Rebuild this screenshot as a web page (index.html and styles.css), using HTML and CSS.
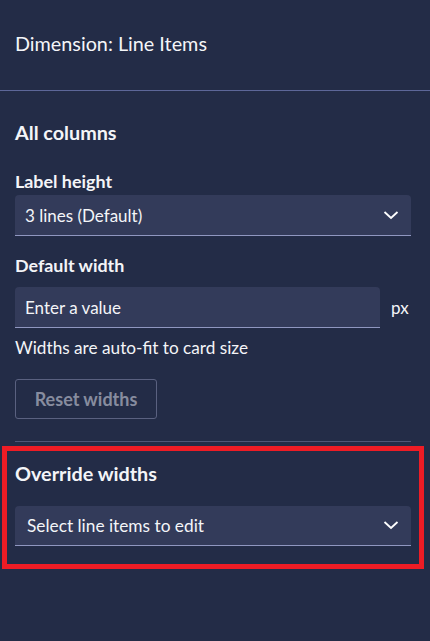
FILE: index.html
```html
<!DOCTYPE html>
<html>
<head>
<meta charset="utf-8">
<link rel="stylesheet" href="styles.css">
</head>
<body>
<div class="panel">
  <div class="header">Dimension: Line Items</div>
  <div class="content">
    <h2 class="section-title first">All columns</h2>
    <div class="label label-height">Label height</div>
    <div class="select">
      <span class="select-text">3 lines (Default)</span>
      <svg class="chev" width="16" height="9" viewBox="0 0 16 9"><path d="M1.5 1 L8 7 L14.5 1" fill="none" stroke="#ffffff" stroke-width="1.8"/></svg>
    </div>
    <div class="label label-width">Default width</div>
    <div class="input-row">
      <div class="input">Enter a value</div>
      <span class="unit">px</span>
    </div>
    <div class="hint">Widths are auto-fit to card size</div>
    <button class="reset">Reset widths</button>
    <div class="divider"></div>
    <div class="override">
      <h2 class="section-title">Override widths</h2>
      <div class="select select2">
        <span class="select-text s2">Select line items to edit</span>
        <svg class="chev" width="16" height="9" viewBox="0 0 16 9"><path d="M1.5 1 L8 7 L14.5 1" fill="none" stroke="#ffffff" stroke-width="1.8"/></svg>
      </div>
      <div class="highlight"></div>
    </div>
  </div>
</div>
</body>
</html>
```
FILE: styles.css
```css
html, body {
  margin: 0;
  padding: 0;
  background: #232c47;
  height: 100%;
}
body {
  font-family: Lato, "Liberation Sans", sans-serif;
  color: #f4f5f8;
}
.panel {
  width: 430px;
}
.header {
  height: 91px;
  box-sizing: border-box;
  padding: 32px 15px 0;
  font-size: 19.8px;
  line-height: 22px;
  border-bottom: 1px solid #5d6799;
}
.content {
  padding: 0 19px 0 15px;
}
.section-title {
  margin: 0;
  font-size: 19.8px;
  line-height: 24px;
  font-weight: 700;
}
.section-title.first {
  margin-top: 29px;
}
.label {
  font-size: 17.9px;
  line-height: 22px;
  font-weight: 700;
}
.label-height {
  margin-top: 26px;
}
.select {
  margin-top: 3px;
  height: 41px;
  box-sizing: border-box;
  background: #333b5a;
  border-radius: 4px 4px 0 0;
  border-bottom: 1px solid #9097c0;
  display: flex;
  align-items: center;
  justify-content: space-between;
  padding: 0 12px 0 10px;
}
.select-text {
  font-size: 17px;
}
.select-text.s2 {
  padding-left: 2px;
  font-size: 17.3px;
}
.chev {
  display: block;
}
.label-width {
  margin-top: 18px;
}
.input-row {
  margin-top: 11px;
  display: flex;
  align-items: center;
  gap: 11px;
}
.input {
  flex: 1;
  height: 41px;
  box-sizing: border-box;
  background: #333b5a;
  border-radius: 4px 4px 0 0;
  border-bottom: 1px solid #9097c0;
  display: flex;
  align-items: center;
  padding: 0 10px;
  font-size: 17px;
}
.unit {
  font-size: 17px;
  width: 20px;
}
.hint {
  margin-top: 10px;
  font-size: 17.2px;
  line-height: 20px;
}
.reset {
  display: block;
  margin-top: 21px;
  width: 142px;
  height: 40px;
  background: transparent;
  border: 1px solid #5a6180;
  border-radius: 3px;
  color: #878c9f;
  font-family: Lato, "Liberation Sans", sans-serif;
  font-size: 18px;
  font-weight: 700;
  padding: 0;
}
.divider {
  margin-top: 22px;
  height: 1px;
  background: #4f5777;
}
.override {
  position: relative;
  padding-top: 19px;
  padding-bottom: 23px;
}
.select2 {
  margin-top: 21px;
  height: 40px;
}
.highlight {
  position: absolute;
  left: -13px;
  right: -13px;
  top: 4px;
  bottom: 0;
  border: 5px solid #ee1c25;
  pointer-events: none;
}
```
